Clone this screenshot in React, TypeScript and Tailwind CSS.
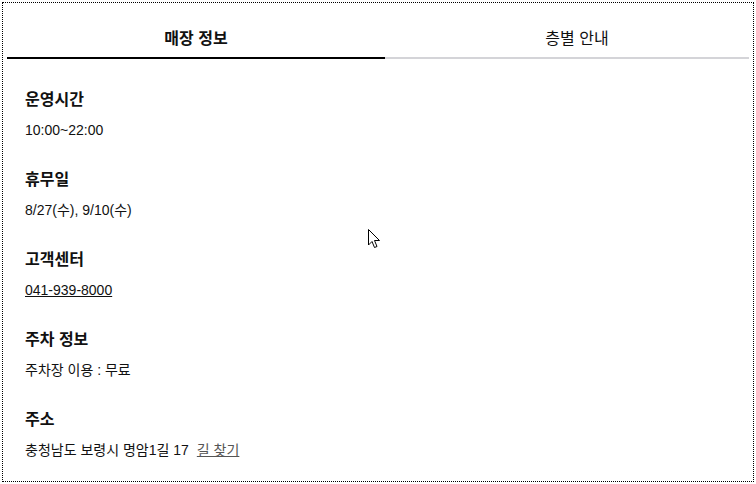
const sections = [
  { title: "운영시간", body: "10:00~22:00" },
  { title: "휴무일", body: "8/27(수), 9/10(수)" },
  { title: "고객센터", body: "041-939-8000", link: true },
  { title: "주차 정보", body: "주차장 이용 : 무료" },
  { title: "주소", body: "충청남도 보령시 명암1길 17", extra: "길 찾기" },
];

function Cursor() {
  return (
    <svg className="absolute left-[368px] top-[229px]" width="13" height="20" viewBox="0 0 13 20">
      <path
        d="M0.5 0.5 L0.5 16 L4 12.5 L6.5 18.5 L9 17.5 L6.5 11.5 L11.5 11.5 Z"
        fill="#fff"
        stroke="#000"
        strokeWidth="1"
        strokeLinejoin="round"
      />
    </svg>
  );
}

export default function App() {
  return (
    <div
      className="relative w-[756px] h-[484px] bg-white p-[2px] text-[#111]"
      style={{ fontFamily: '"Liberation Sans", "Noto Sans CJK KR", sans-serif' }}
    >
      <div className="h-[480px] w-[752px] border border-dotted border-black px-[4px]">
        <div className="flex h-[56px]">
          <button className="w-[378px] flex items-end justify-center border-b-2 border-black text-[16px] leading-5 font-bold pb-[8px]">
            매장 정보
          </button>
          <button className="flex-1 flex items-end justify-center border-b-2 border-[#d4d4d8] text-[16px] leading-5 pb-[8px] pl-[20px]">
            층별 안내
          </button>
        </div>

        <div className="pl-[18px] pt-[29px]">
          {sections.map((s, i) => (
            <div key={i} className="mb-[28px]">
              <h3 className="h-6 leading-6 text-[16px] font-bold">{s.title}</h3>
              <p className="mt-2 h-5 leading-5 text-[14px]">
                {s.link ? <a className="underline">{s.body}</a> : s.body}
                {s.extra && (
                  <a className="ml-[8px] underline text-[#555]">{s.extra}</a>
                )}
              </p>
            </div>
          ))}
        </div>
      </div>
      <Cursor />
    </div>
  );
}
